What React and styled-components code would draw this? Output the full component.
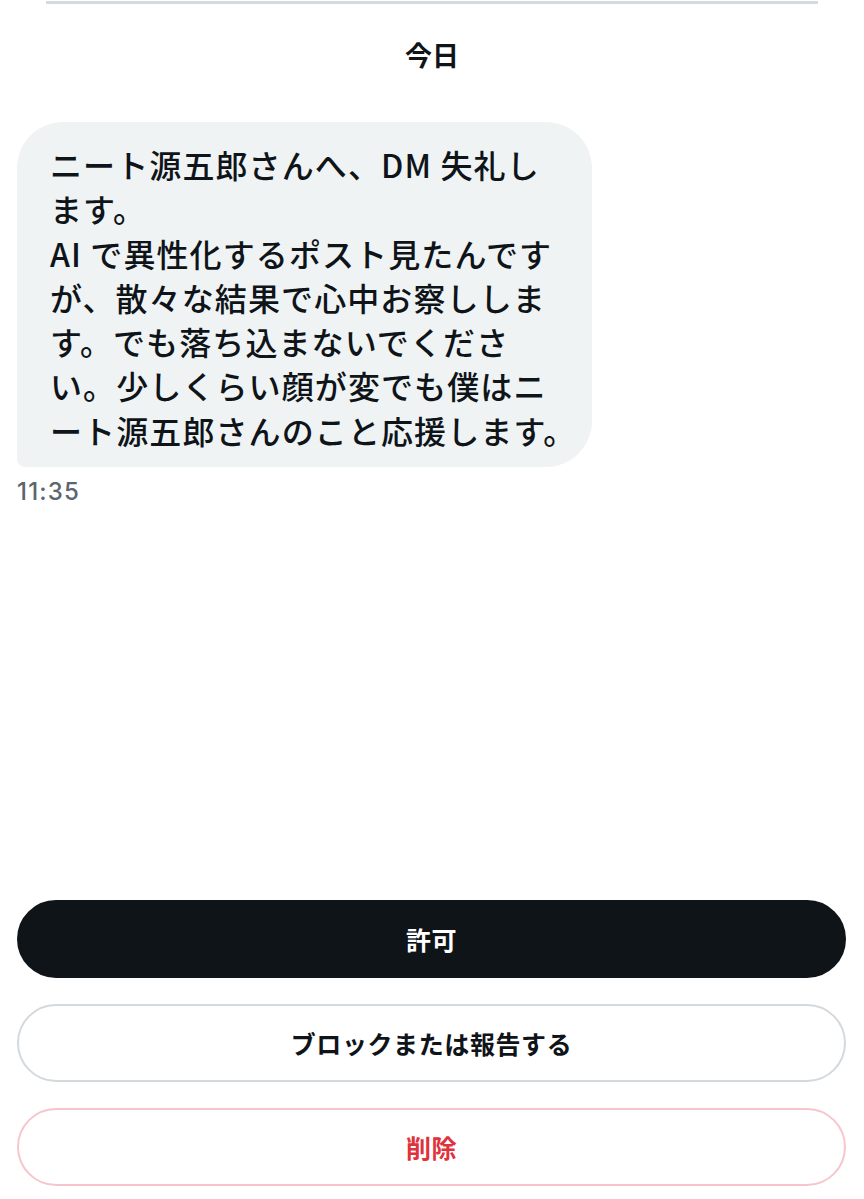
import React from 'react';
import styled, { createGlobalStyle } from 'styled-components';

const GlobalStyle = createGlobalStyle`
  html, body {
    margin: 0;
    padding: 0;
    background: #ffffff;
  }
  body {
    font-family: "Noto Sans CJK JP", "Noto Sans", "Liberation Sans", sans-serif;
    color: #0f1419;
  }
`;

const Page = styled.div`
  display: flex;
  flex-direction: column;
  height: 1199px;
  box-sizing: border-box;
  padding-bottom: 13px;
`;

const TopRule = styled.div`
  height: 3px;
  margin: 1px 46px 0;
  background: #d6dadd;
`;

const DateLabel = styled.div`
  margin-top: 34px;
  text-align: center;
  font-size: 27px;
  font-weight: 700;
  line-height: 34px;
`;

const Thread = styled.div`
  display: flex;
  flex-direction: column;
  align-items: flex-start;
  margin-top: 50px;
  padding-left: 17px;
`;

const Bubble = styled.div`
  width: 575px;
  box-sizing: border-box;
  background: #eff3f4;
  border-radius: 46px 46px 46px 8px;
  padding: 20px 12px 15px 33px;
`;

const Line = styled.span`
  display: block;
  white-space: nowrap;
  font-size: 32px;
  font-weight: 500;
  line-height: 44.3px;
  letter-spacing: 1.1px;
`;

const Time = styled.div`
  margin-top: 10px;
  font-family: "Inter", "Liberation Sans", sans-serif;
  font-size: 24px;
  font-weight: 500;
  letter-spacing: 1.2px;
  color: #5b6670;
  line-height: 30px;
`;

const Spacer = styled.div`
  flex: 1;
`;

const Actions = styled.div`
  display: flex;
  flex-direction: column;
  gap: 26px;
  margin: 0 18px 0 17px;
`;

const ActionButton = styled.button`
  height: 78px;
  border-radius: 39px;
  box-sizing: border-box;
  font-family: "Noto Sans CJK JP", "Noto Sans", sans-serif;
  font-size: 25px;
  font-weight: 700;
  letter-spacing: 0.6px;
  cursor: pointer;
  background: ${p => (p.variant === 'primary' ? '#0f1419' : '#ffffff')};
  color: ${p => (p.variant === 'primary' ? '#ffffff' : p.variant === 'danger' ? '#e0323c' : '#0f1419')};
  border: 2px solid ${p => (p.variant === 'primary' ? '#0f1419' : p.variant === 'danger' ? '#f6c6cc' : '#d3d9dd')};
`;

const lines = [
  'ニート源五郎さんへ、DM 失礼し',
  'ます。',
  'AI で異性化するポスト見たんです',
  'が、散々な結果で心中お察ししま',
  'す。でも落ち込まないでくださ',
  'い。少しくらい顔が変でも僕はニ',
  'ート源五郎さんのこと応援します。',
];

export default function App() {
  return (
    <>
      <GlobalStyle />
      <Page>
        <TopRule />
        <DateLabel>今日</DateLabel>
        <Thread>
          <Bubble>
            {lines.map((text, i) => (
              <Line key={i}>{text}</Line>
            ))}
          </Bubble>
          <Time>11:35</Time>
        </Thread>
        <Spacer />
        <Actions>
          <ActionButton variant="primary">許可</ActionButton>
          <ActionButton>ブロックまたは報告する</ActionButton>
          <ActionButton variant="danger">削除</ActionButton>
        </Actions>
      </Page>
    </>
  );
}
